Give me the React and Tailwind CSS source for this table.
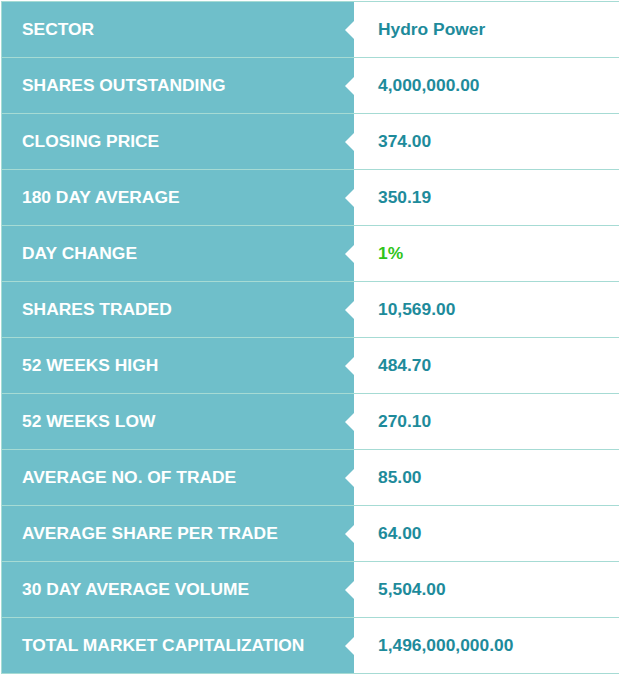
import React from 'react';

const rows = [
  { label: 'SECTOR', value: 'Hydro Power' },
  { label: 'SHARES OUTSTANDING', value: '4,000,000.00' },
  { label: 'CLOSING PRICE', value: '374.00' },
  { label: '180 DAY AVERAGE', value: '350.19' },
  { label: 'DAY CHANGE', value: '1%', up: true },
  { label: 'SHARES TRADED', value: '10,569.00' },
  { label: '52 WEEKS HIGH', value: '484.70' },
  { label: '52 WEEKS LOW', value: '270.10' },
  { label: 'AVERAGE NO. OF TRADE', value: '85.00' },
  { label: 'AVERAGE SHARE PER TRADE', value: '64.00' },
  { label: '30 DAY AVERAGE VOLUME', value: '5,504.00' },
  { label: 'TOTAL MARKET CAPITALIZATION', value: '1,496,000,000.00' },
];

export default function App() {
  return (
    <div className="w-[619px] bg-white pt-px pl-px" style={{ fontFamily: '"Liberation Sans", Arial, sans-serif' }}>
      <div className="border-t border-l border-[#a6dbd4]">
        {rows.map((row) => (
          <div key={row.label} className="flex h-[56px] border-b border-[#a6dbd4]">
            <div className="relative flex w-[352px] items-center bg-[#6fbfca] pl-[20px] text-[17.4px] font-bold text-white">
              {row.label}
              <span className="absolute right-0 top-1/2 -translate-y-1/2 border-y-[9px] border-r-[9px] border-y-transparent border-r-white" />
            </div>
            <div className={`flex flex-1 items-center pl-[24px] text-[17.4px] font-bold ${row.up ? 'text-[#2fc41a]' : 'text-[#1e8b9b]'}`}>
              {row.value}
            </div>
          </div>
        ))}
      </div>
    </div>
  );
}
